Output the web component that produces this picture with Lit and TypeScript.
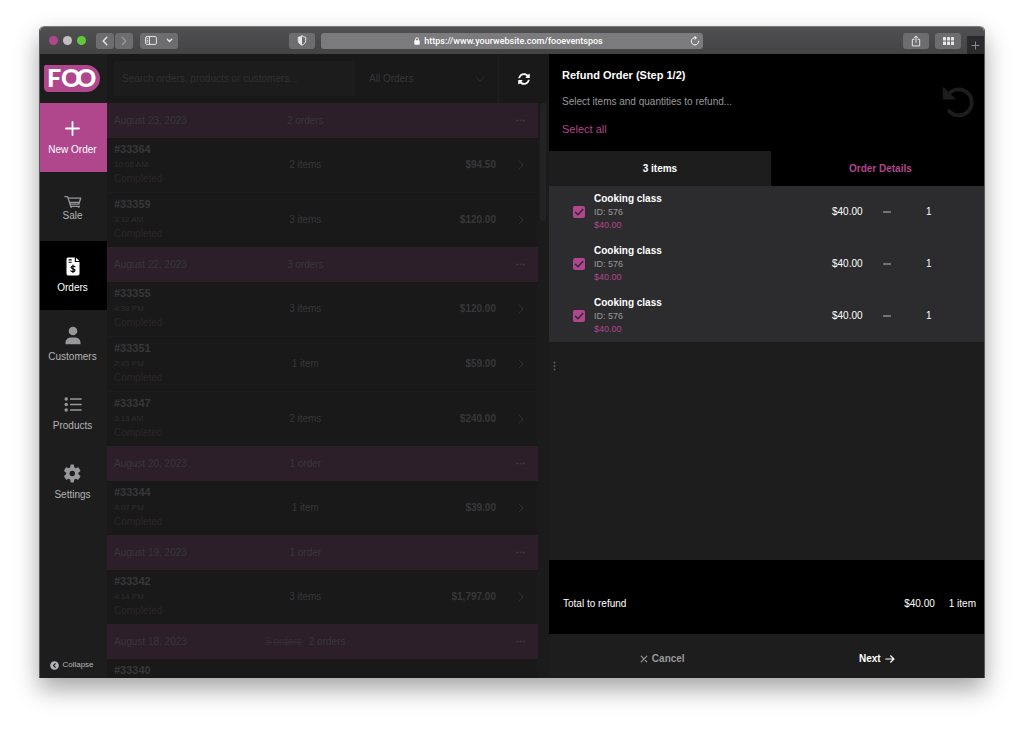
import { LitElement, html, css, svg, nothing } from "lit";

interface Order {
  id: string;
  time?: string;
  status?: string;
  items?: string;
  total?: string;
}

interface Group {
  date: string;
  count: string;
  was?: string;
  orders: Order[];
}

const GROUPS: Group[] = [
  {
    date: "August 23, 2023",
    count: "2 orders",
    orders: [
      { id: "#33364", time: "10:06 AM", status: "Completed", items: "2 items", total: "$94.50" },
      { id: "#33359", time: "3:12 AM", status: "Completed", items: "3 items", total: "$120.00" },
    ],
  },
  {
    date: "August 22, 2023",
    count: "3 orders",
    orders: [
      { id: "#33355", time: "4:38 PM", status: "Completed", items: "3 items", total: "$120.00" },
      { id: "#33351", time: "2:45 PM", status: "Completed", items: "1 item", total: "$59.00" },
      { id: "#33347", time: "3:13 AM", status: "Completed", items: "2 items", total: "$240.00" },
    ],
  },
  {
    date: "August 20, 2023",
    count: "1 order",
    orders: [{ id: "#33344", time: "4:07 PM", status: "Completed", items: "1 item", total: "$39.00" }],
  },
  {
    date: "August 19, 2023",
    count: "1 order",
    orders: [{ id: "#33342", time: "4:14 PM", status: "Completed", items: "3 items", total: "$1,797.00" }],
  },
  {
    date: "August 18, 2023",
    count: "2 orders",
    was: "3 orders",
    orders: [{ id: "#33340" }],
  },
];

const icon = (w: number, h: number, body: unknown, cls = "") =>
  html`<svg class=${cls} width=${w} height=${h} viewBox="0 0 ${w} ${h}" fill="none" stroke="currentColor"
    stroke-linecap="round" stroke-linejoin="round" aria-hidden="true">${body}</svg>`;

const ICONS = {
  back: icon(6, 10, svg`<path d="M4.800 1.200 1.200 5l3.600 3.800" stroke-width="1.400"/>`),
  forward: icon(6, 10, svg`<path d="M1.200 1.200 4.800 5 1.200 8.800" stroke-width="1.300"/>`),
  panels: icon(12, 9, svg`<rect x=".6" y=".6" width="10.800" height="7.800" rx="1"/><path d="M4.500.6v7.800M2 2.700h1M2 4.400h1M2 6.100h1" stroke-width=".9"/>`),
  caret: icon(7, 5, svg`<path d="M1.300 1.200 3.500 3.500l2.200-2.300" stroke-width="1.300"/>`),
  shield: icon(10, 11, svg`<path d="M5 1C3.900 1.800 2.500 2.100 1.300 2.200v3.500C1.300 7.900 3 9.300 5 10.200 7 9.300 8.700 7.900 8.700 5.700V2.200C7.500 2.100 6.100 1.800 5 1z" stroke-width="1"/><path d="M5 1v9.200C3 9.300 1.300 7.900 1.300 5.700V2.200C2.500 2.100 3.900 1.800 5 1z" fill="currentColor" stroke="none"/>`),
  lock: icon(6, 8, svg`<rect x=".3" y="3.300" width="5.400" height="4.400" rx=".8" fill="currentColor" stroke="none"/><path d="M1.500 3.500V2.300a1.500 1.500 0 0 1 3 0v1.200" stroke-width=".9"/>`),
  reload: icon(10, 10, svg`<path d="M8.700 5.200A3.700 3.700 0 1 1 5.600 1.600M4.700.5l1.700 1.200-1.400 1.600" stroke-width="1"/>`),
  share: icon(10, 12, svg`<path d="M3 4.400H1.300v6.500h7.400V4.400H7M5 7.400V1.200M3 3l2-1.900L7 3" stroke-width="1"/>`),
  grid: icon(11, 8, svg`<g fill="currentColor" stroke="none"><rect width="3" height="3.500" rx=".6"/><rect x="4" width="3" height="3.500" rx=".6"/><rect x="8" width="3" height="3.500" rx=".6"/><rect y="4.500" width="3" height="3.500" rx=".6"/><rect x="4" y="4.500" width="3" height="3.500" rx=".6"/><rect x="8" y="4.500" width="3" height="3.500" rx=".6"/></g>`),
  tabPlus: icon(9, 9, svg`<path d="M4.500 1v7M1 4.500h7" stroke-width="1"/>`),
  plus: icon(15, 19, svg`<path d="M7.500 3v13M1 9.500h13" stroke-width="1.800"/>`),
  cart: icon(18, 16, svg`<path d="M.9 4.600h2.700l3.100 9.700h8.800M4.500 6.200h12.200l-1.900 6H6.200M5.600 10.400h9.500" stroke-width="1.300"/><circle cx="7.200" cy="14.900" r=".9" fill="currentColor" stroke="none"/><circle cx="14.600" cy="14.900" r=".9" fill="currentColor" stroke="none"/>`),
  invoice: icon(14, 19, svg`<path d="M2 .5h6.800V5h4.700v11.800a1.700 1.700 0 0 1-1.700 1.700H2.200a1.700 1.700 0 0 1-1.700-1.700V2A1.500 1.500 0 0 1 2 .5z" fill="currentColor" stroke="none"/><path d="M10 .7 13.400 4H10z" fill="currentColor" stroke="none"/><path d="M3 2.900h2.300M3 5.200h2.300" stroke="#000" stroke-width="1.100"/><path d="M8.900 9.700C8.500 9.200 7.800 9 7 9c-1.100 0-1.900.5-1.900 1.300 0 2 3.900.9 3.900 2.900 0 .9-.8 1.400-2 1.400-.9 0-1.600-.3-2.100-.8M7 8v7.600" stroke="#000" stroke-width="1.200"/>`),
  person: icon(16, 19, svg`<g fill="currentColor" stroke="none"><circle cx="8" cy="5" r="4.300"/><path d="M.5 18.300v-1.500c0-3.200 2.500-5.300 5.300-5.300h4.400c2.800 0 5.300 2.100 5.300 5.300v1.500z"/></g>`),
  list: icon(18, 19, svg`<g fill="currentColor" stroke="none"><circle cx="2.200" cy="4" r="1.700"/><circle cx="2.200" cy="9.500" r="1.700"/><circle cx="2.200" cy="15" r="1.700"/></g><path d="M6.700 4h10.300M6.700 9.500h10.300M6.700 15h10.300" stroke-width="1.700"/>`),
  gear: html`<svg width="19" height="19" viewBox="0 0 24 24" fill="currentColor" aria-hidden="true"><path d="M19.500 12c0-.3 0-.7-.1-1l2.400-1.900c.2-.2.300-.5.100-.8l-2.300-3.900c-.1-.3-.5-.4-.7-.3l-2.800 1.200c-.6-.5-1.200-.8-1.900-1.100L13.800 1.200c0-.3-.3-.5-.6-.5h-3c-.4 0-.6.2-.7.5l-.4 3c-.7.300-1.300.7-1.900 1.100L4.400 4.100c-.3-.1-.6 0-.8.3L1.400 8.300c-.2.300-.1.600.2.800L4 11a8 8 0 0 0 0 2l-2.400 1.900c-.3.200-.4.500-.2.800l2.300 3.900c.1.300.5.400.7.300l2.800-1.200c.6.500 1.200.8 1.900 1.100l.4 3c.1.300.3.500.7.500h3c.3 0 .6-.2.600-.5l.4-3c.7-.3 1.300-.7 1.900-1.100l2.800 1.200c.3.100.6 0 .7-.3l2.300-3.900c.2-.3.100-.6-.1-.8L19.400 13c.1-.3.100-.7.100-1zM11.700 15.400a3.400 3.400 0 1 1 0-6.800 3.400 3.400 0 0 1 0 6.800z" fill-rule="evenodd"/></svg>`,
  collapse: icon(9, 9, svg`<circle cx="4.500" cy="4.500" r="4.300" fill="currentColor" stroke="none"/><path d="M5.300 2.700 3.500 4.500l1.800 1.800" stroke="#1d1d1d" stroke-width="1.100"/>`),
  chevronDown: icon(10, 6, svg`<path d="M1 1l4 4 4-4" stroke-width="1"/>`, "select-caret"),
  refresh: html`<svg width="12" height="12" viewBox="0 0 512 512" fill="currentColor" aria-hidden="true"><path d="M371 134c-32-30-73-46-116-46-78 0-145 54-164 128-1 5-6 9-12 9H26c-8 0-13-7-12-14C35 96 136 8 256 8c66 0 126 26 171 68l36-36c15-15 41-4 41 17v134c0 13-11 24-24 24H346c-21 0-32-26-17-41l42-40zM32 296h134c21 0 32 26 17 41l-42 41c32 30 73 46 116 46 78 0 145-53 163-128 2-5 6-9 12-9h54c7 0 13 7 12 14-22 115-122 203-242 203-66 0-126-26-171-68l-36 36C34 487 8 476 8 455V320c0-13 11-24 24-24z"/></svg>`,
  undo: icon(32, 32, svg`<path d="M6 9A13 13 0 1 1 7 25" stroke-width="3.700"/><path d="M1.500 2v10.700h10.800z" fill="currentColor" stroke-width="1.600"/>`),
  chevron: icon(6, 10, svg`<path d="M1 1l4 4-4 4" stroke-width="1"/>`),
  dots: icon(9, 3, svg`<g fill="currentColor" stroke="none"><circle cx="1.300" cy="1.500" r="1"/><circle cx="4.500" cy="1.500" r="1"/><circle cx="7.700" cy="1.500" r="1"/></g>`),
  tick: icon(12, 12, svg`<path d="M2.400 6.200 4.900 8.700 9.800 3.400" stroke-width="1.400"/>`, "tick"),
  handle: icon(3, 10, svg`<g fill="currentColor" stroke="none"><circle cx="1.500" cy="1.500" r="1"/><circle cx="1.500" cy="5" r="1"/><circle cx="1.500" cy="8.500" r="1"/></g>`),
  minus: icon(8, 2, svg`<path d="M.5 1h7" stroke-width="1.400"/>`),
  close: icon(8, 8, svg`<path d="M1.200 1.200l5.600 5.600M6.800 1.200 1.200 6.800" stroke-width="1.200"/>`),
  arrow: icon(10, 8, svg`<path d="M.8 4h8M5.600.8 8.900 4 5.600 7.200" stroke-width="1.200"/>`),
};

const NAV = [
  { label: "New Order", glyph: ICONS.plus, kind: "primary" },
  { label: "Sale", glyph: ICONS.cart, kind: "tight" },
  { label: "Orders", glyph: ICONS.invoice, kind: "current" },
  { label: "Customers", glyph: ICONS.person, kind: "" },
  { label: "Products", glyph: ICONS.list, kind: "" },
  { label: "Settings", glyph: ICONS.gear, kind: "" },
];

const shared = css`
  * {
    box-sizing: border-box;
  }
  button,
  input,
  select {
    font: inherit;
    color: inherit;
    background: none;
    border: 0;
    margin: 0;
    padding: 0;
    border-radius: 0;
  }
  button {
    display: flex;
    align-items: center;
    justify-content: center;
  }
  svg {
    display: block;
    flex: none;
  }
  table {
    width: 100%;
    table-layout: fixed;
    border-spacing: 0;
  }
  td,
  th {
    padding: 0;
    font-weight: 400;
    text-align: left;
  }
`;

class BrowserBar extends LitElement {
  static styles = [
    shared,
    css`
      :host {
        display: grid;
        grid-template-columns: 22fr 30fr 22fr;
        height: 28px;
        flex: none;
        box-sizing: border-box;
        background: linear-gradient(#505052, #434344);
        border-top: 1px solid #7c7c7d;
        color: #e6e6e6;
        border-radius: 5px 5px 0 0;
        overflow: hidden;
      }
      .side {
        display: flex;
        align-items: center;
        padding: 0 6px 0 9px;
      }
      .light {
        width: 9px;
        height: 9px;
        margin-right: 5px;
        border-radius: 50%;
        background: #b0468c;
      }
      .light.grey {
        background: #c4bec2;
      }
      .light.green {
        background: #61c83b;
      }
      .btn {
        height: 16px;
        width: 18px;
        border-radius: 3px;
        background: #6d6d6f;
      }
      .back {
        margin: 0 1px 0 5px;
      }
      .forward {
        color: #98989a;
      }
      .panels {
        width: 38px;
        gap: 9px;
        margin-left: 7px;
      }
      .wide {
        width: 26px;
      }
      .push {
        margin-left: auto;
      }
      .address {
        align-self: center;
        display: flex;
        align-items: center;
        height: 16px;
        padding-right: 3px;
        border-radius: 3px;
        background: #7b7b7d;
        color: #fff;
        font: 500 9px/16px Roboto, sans-serif;
      }
      .url {
        flex: 1;
        display: flex;
        align-items: center;
        justify-content: center;
        gap: 4px;
        padding-left: 6px;
      }
      .end {
        padding: 0;
        gap: 6px;
      }
      .tab {
        align-self: flex-end;
        width: 17px;
        height: 18px;
        background: #2a2a2c;
        color: #8b8b8d;
      }
    `,
  ];

  render() {
    return html`
      <div class="side">
        <span class="light"></span><span class="light grey"></span><span class="light green"></span>
        <button class="btn back" aria-label="Back">${ICONS.back}</button>
        <button class="btn forward" aria-label="Forward">${ICONS.forward}</button>
        <button class="btn panels" aria-label="Sidebar">${ICONS.panels}${ICONS.caret}</button>
        <button class="btn wide push" aria-label="Privacy">${ICONS.shield}</button>
      </div>
      <div class="address">
        <span class="url">${ICONS.lock}<span>https://www.yourwebsite.com/fooeventspos</span></span>
        <button aria-label="Reload">${ICONS.reload}</button>
      </div>
      <div class="side end">
        <button class="btn wide push" aria-label="Share">${ICONS.share}</button>
        <button class="btn wide" aria-label="Tabs">${ICONS.grid}</button>
        <button class="tab" aria-label="New tab">${ICONS.tabPlus}</button>
      </div>
    `;
  }
}
customElements.define("browser-bar", BrowserBar);

class SideNav extends LitElement {
  static styles = [
    shared,
    css`
      :host {
        display: flex;
        flex-direction: column;
        width: 67px;
        flex: none;
        background: #1d1d1d;
        color: #98989b;
      }
      .logo {
        height: 49px;
        padding: 11px 0 0 4px;
      }
      .mark {
        overflow: visible;
      }
      .word {
        font: 900 25px Lato, sans-serif;
      }
      nav {
        display: flex;
        flex-direction: column;
      }
      .item {
        display: flex;
        flex-direction: column;
        align-items: center;
        justify-content: center;
        gap: 6px;
        height: 69px;
        padding-right: 2px;
        line-height: 12px;
        color: inherit;
        text-decoration: none;
      }
      .label {
        color: #b4b4b6;
      }
      .primary,
      .current {
        color: #fff;
      }
      .primary .label,
      .current .label {
        color: #fff;
      }
      .primary {
        background: #b0468c;
      }
      .current {
        background: #000;
      }
      .tight {
        gap: 2px;
      }
      .collapse {
        gap: 3px;
        margin-top: auto;
        height: 26px;
        padding-right: 3px;
        font-size: 8px;
        color: #b4b4b6;
      }
    `,
  ];

  render() {
    return html`
      <div class="logo">
        <svg class="mark" width="56" height="27" viewBox="0 0 56 27" role="img" aria-label="FOO">
          <path d="M1.500 0H42.500a13.500 13.500 0 0 1 0 27H5C2 27 0 25 0 22V1.500A1.500 1.500 0 0 1 1.500 0z" fill="#b0468c" />
          <text class="word" x="3 17 32" y="22" fill="#fff">FOO</text>
        </svg>
      </div>
      <nav>
        ${NAV.map(
          (n) => html`<a class="item ${n.kind}" href="#">${n.glyph}<span class="label">${n.label}</span></a>`
        )}
      </nav>
      <button class="collapse">${ICONS.collapse}Collapse</button>
    `;
  }
}
customElements.define("side-nav", SideNav);

class OrderList extends LitElement {
  static styles = [
    shared,
    css`
      :host {
        display: flex;
        flex-direction: column;
        flex: 442 1 0;
        min-width: 0;
        background: #191919;
        color: #373739;
      }
      .tools {
        display: flex;
        align-items: center;
        height: 49px;
        flex: none;
      }
      .search {
        flex: 1;
        min-width: 0;
        height: 35px;
        margin-left: 7px;
        padding: 0 8px;
        background: #1c1c1c;
      }
      .search::placeholder {
        color: #303032;
        opacity: 1;
      }
      .filter {
        display: grid;
        align-items: center;
        width: 144px;
        height: 49px;
        padding: 0 13px 0 14px;
        border-right: 1px solid #1e1e1e;
      }
      .filter > * {
        grid-area: 1 / 1;
      }
      .filter select {
        appearance: none;
        width: 100%;
        height: 35px;
      }
      .select-caret {
        justify-self: end;
        color: #2c2c2e;
      }
      .refresh {
        width: 50px;
        height: 49px;
        color: #fff;
      }
      .body {
        display: flex;
        flex: 1;
        min-height: 0;
        overflow: hidden;
      }
      .rows {
        flex: 1;
      }
      .track {
        width: 11px;
        flex: none;
        padding: 0 3px 0 2px;
        background: #1b1b1b;
      }
      .thumb {
        height: 118px;
        border-radius: 3px;
        background: #232225;
      }
      .c-order {
        width: 36%;
      }
      .c-items {
        width: 20%;
      }
      .c-more {
        width: 35px;
      }
      .day td,
      .day th {
        height: 35px;
        background: #2c1f29;
      }
      .order td,
      .order th {
        height: 54px;
      }
      .order + .order td,
      .order + .order th {
        height: 55px;
        border-top: 1px solid #1d1d1d;
      }
      .name {
        padding-left: 7px;
      }
      .order .name {
        padding-top: 4px;
        vertical-align: top;
      }
      .items {
        text-align: center;
        white-space: nowrap;
      }
      .was {
        margin-right: 7px;
        color: #352d34;
      }
      .total {
        padding-right: 7px;
        text-align: right;
        font-weight: 700;
      }
      .id,
      .time,
      .status {
        display: block;
        line-height: 15px;
      }
      .id {
        font-size: 11px;
        font-weight: 700;
      }
      .time {
        font-size: 8px;
        color: #2d2d2f;
      }
      .status {
        line-height: 14px;
        color: #2b262a;
      }
      .more button {
        width: 35px;
        height: 30px;
        color: #303032;
      }
      .day .more button {
        color: #403a40;
      }
    `,
  ];

  render() {
    return html`
      <div class="tools">
        <input class="search" type="search" aria-label="Search orders" placeholder="Search orders, products or customers..." />
        <label class="filter">
          <select aria-label="Filter orders">
            <option>All Orders</option>
          </select>
          ${ICONS.chevronDown}
        </label>
        <button class="refresh" aria-label="Refresh">${ICONS.refresh}</button>
      </div>
      <div class="body">
        <div class="rows">
          <table>
            <colgroup>
              <col class="c-order" />
              <col class="c-items" />
              <col />
              <col class="c-more" />
            </colgroup>
            ${GROUPS.map(
              (g) => html`<tbody>
                <tr class="day">
                  <th class="name">${g.date}</th>
                  <td class="items">${g.was ? html`<s class="was">${g.was}</s>` : nothing}${g.count}</td>
                  <td></td>
                  <td class="more"><button aria-label="More">${ICONS.dots}</button></td>
                </tr>
                ${g.orders.map(
                  (o) => html`<tr class="order">
                    <th class="name">
                      <span class="id">${o.id}</span>
                      ${o.time ? html`<span class="time">${o.time}</span>` : nothing}
                      ${o.status ? html`<span class="status">${o.status}</span>` : nothing}
                    </th>
                    <td class="items">${o.items}</td>
                    <td class="total">${o.total}</td>
                    <td class="more">
                      ${o.total ? html`<button aria-label="Open">${ICONS.chevron}</button>` : nothing}
                    </td>
                  </tr>`
                )}
              </tbody>`
            )}
          </table>
        </div>
        <div class="track"><div class="thumb"></div></div>
      </div>
    `;
  }
}
customElements.define("order-list", OrderList);

class RefundPanel extends LitElement {
  static styles = [
    shared,
    css`
      :host {
        position: relative;
        display: flex;
        flex-direction: column;
        flex: 435 1 0;
        min-width: 0;
        background: #1d1d1d;
        color: #fff;
      }
      header {
        display: flex;
        align-items: center;
        justify-content: space-between;
        height: 97px;
        padding: 0 10px 2px 13px;
        background: #000;
      }
      h1 {
        margin: 0 0 12px;
        font-size: 11px;
        line-height: 16px;
      }
      p {
        margin: 0 0 12px;
        line-height: 14px;
        color: #98989b;
      }
      .all {
        font-size: 11px;
        line-height: 16px;
        color: #b0468c;
      }
      .undo {
        color: #1d1d1d;
      }
      .tabs {
        display: grid;
        grid-template-columns: 51fr 49fr;
        height: 35px;
        flex: none;
        font-weight: 700;
      }
      .other {
        padding-left: 6px;
        background: #000;
        color: #b0468c;
      }
      .lines {
        background: #2c2c2e;
      }
      .lines td,
      .lines th {
        height: 52px;
      }
      .c-check {
        width: 45px;
      }
      .c-price {
        width: 48px;
      }
      .c-minus {
        width: 46px;
      }
      .c-qty {
        width: 58px;
      }
      .check {
        display: grid;
        width: 12px;
        margin-left: 24px;
        color: #2c2c2e;
      }
      .check > * {
        grid-area: 1 / 1;
      }
      .check input {
        appearance: none;
        width: 12px;
        height: 12px;
        border-radius: 2px;
        background: #b0468c;
      }
      .tick {
        pointer-events: none;
      }
      .product,
      .sku,
      .cost {
        display: block;
        line-height: 13px;
      }
      .product {
        font-weight: 700;
      }
      .sku,
      .cost {
        font-size: 9px;
      }
      .sku {
        line-height: 14px;
        color: #98989b;
      }
      .cost {
        color: #b0468c;
      }
      .minus {
        width: 14px;
        height: 16px;
        color: #8b8b8e;
      }
      .handle {
        position: absolute;
        left: 4px;
        top: 50%;
        transform: translateY(-50%);
        color: #5c5c5e;
      }
      .summary {
        display: flex;
        align-items: center;
        gap: 14px;
        height: 74px;
        margin-top: auto;
        padding: 14px 8px 0 14px;
        background: #000;
      }
      .grow {
        flex: 1;
      }
      .actions {
        display: grid;
        grid-template-columns: 1fr 1fr;
        height: 44px;
        padding: 6px 0 0 6px;
        font-weight: 700;
      }
      .actions button {
        gap: 4px;
      }
      .cancel {
        color: #98989b;
      }
    `,
  ];

  render() {
    return html`
      <header>
        <div>
          <h1>Refund Order (Step 1/2)</h1>
          <p>Select items and quantities to refund...</p>
          <button class="all">Select all</button>
        </div>
        <span class="undo">${ICONS.undo}</span>
      </header>
      <div class="tabs">
        <button>3 items</button>
        <button class="other">Order Details</button>
      </div>
      <table class="lines">
        <colgroup>
          <col class="c-check" />
          <col />
          <col class="c-price" />
          <col class="c-minus" />
          <col class="c-qty" />
        </colgroup>
        ${[1, 2, 3].map(
          (n) => html`<tr>
            <td>
              <span class="check"><input id="line-${n}" type="checkbox" checked />${ICONS.tick}</span>
            </td>
            <th>
              <label for="line-${n}">
                <span class="product">Cooking class</span><span class="sku">ID: 576</span
                ><span class="cost">$40.00</span>
              </label>
            </th>
            <td>$40.00</td>
            <td><button class="minus" aria-label="Less">${ICONS.minus}</button></td>
            <td>1</td>
          </tr>`
        )}
      </table>
      <span class="handle">${ICONS.handle}</span>
      <div class="summary">
        <span class="grow">Total to refund</span><span>$40.00</span><span>1 item</span>
      </div>
      <div class="actions">
        <button class="cancel">${ICONS.close}Cancel</button>
        <button>Next${ICONS.arrow}</button>
      </div>
    `;
  }
}
customElements.define("refund-panel", RefundPanel);

class AppRoot extends LitElement {
  static styles = css`
    :host {
      display: flex;
      box-sizing: border-box;
      height: 100vh;
      padding: 26px 39px 52px;
      background: #fff;
      font: 10px/14px "Liberation Sans", Arial, sans-serif;
    }
    .window {
      flex: 1;
      min-width: 0;
      display: flex;
      flex-direction: column;
      border-radius: 5px 5px 0 0;
      border-left: 1px solid #58585a;
      border-right: 1px solid #58585a;
      box-shadow: 0 11px 24px rgba(0, 0, 0, 0.36);
    }
    .content {
      flex: 1;
      min-height: 0;
      display: flex;
    }
  `;

  render() {
    return html`
      <div class="window">
        <browser-bar></browser-bar>
        <div class="content">
          <side-nav></side-nav>
          <order-list></order-list>
          <refund-panel></refund-panel>
        </div>
      </div>
    `;
  }
}
customElements.define("app-root", AppRoot);
